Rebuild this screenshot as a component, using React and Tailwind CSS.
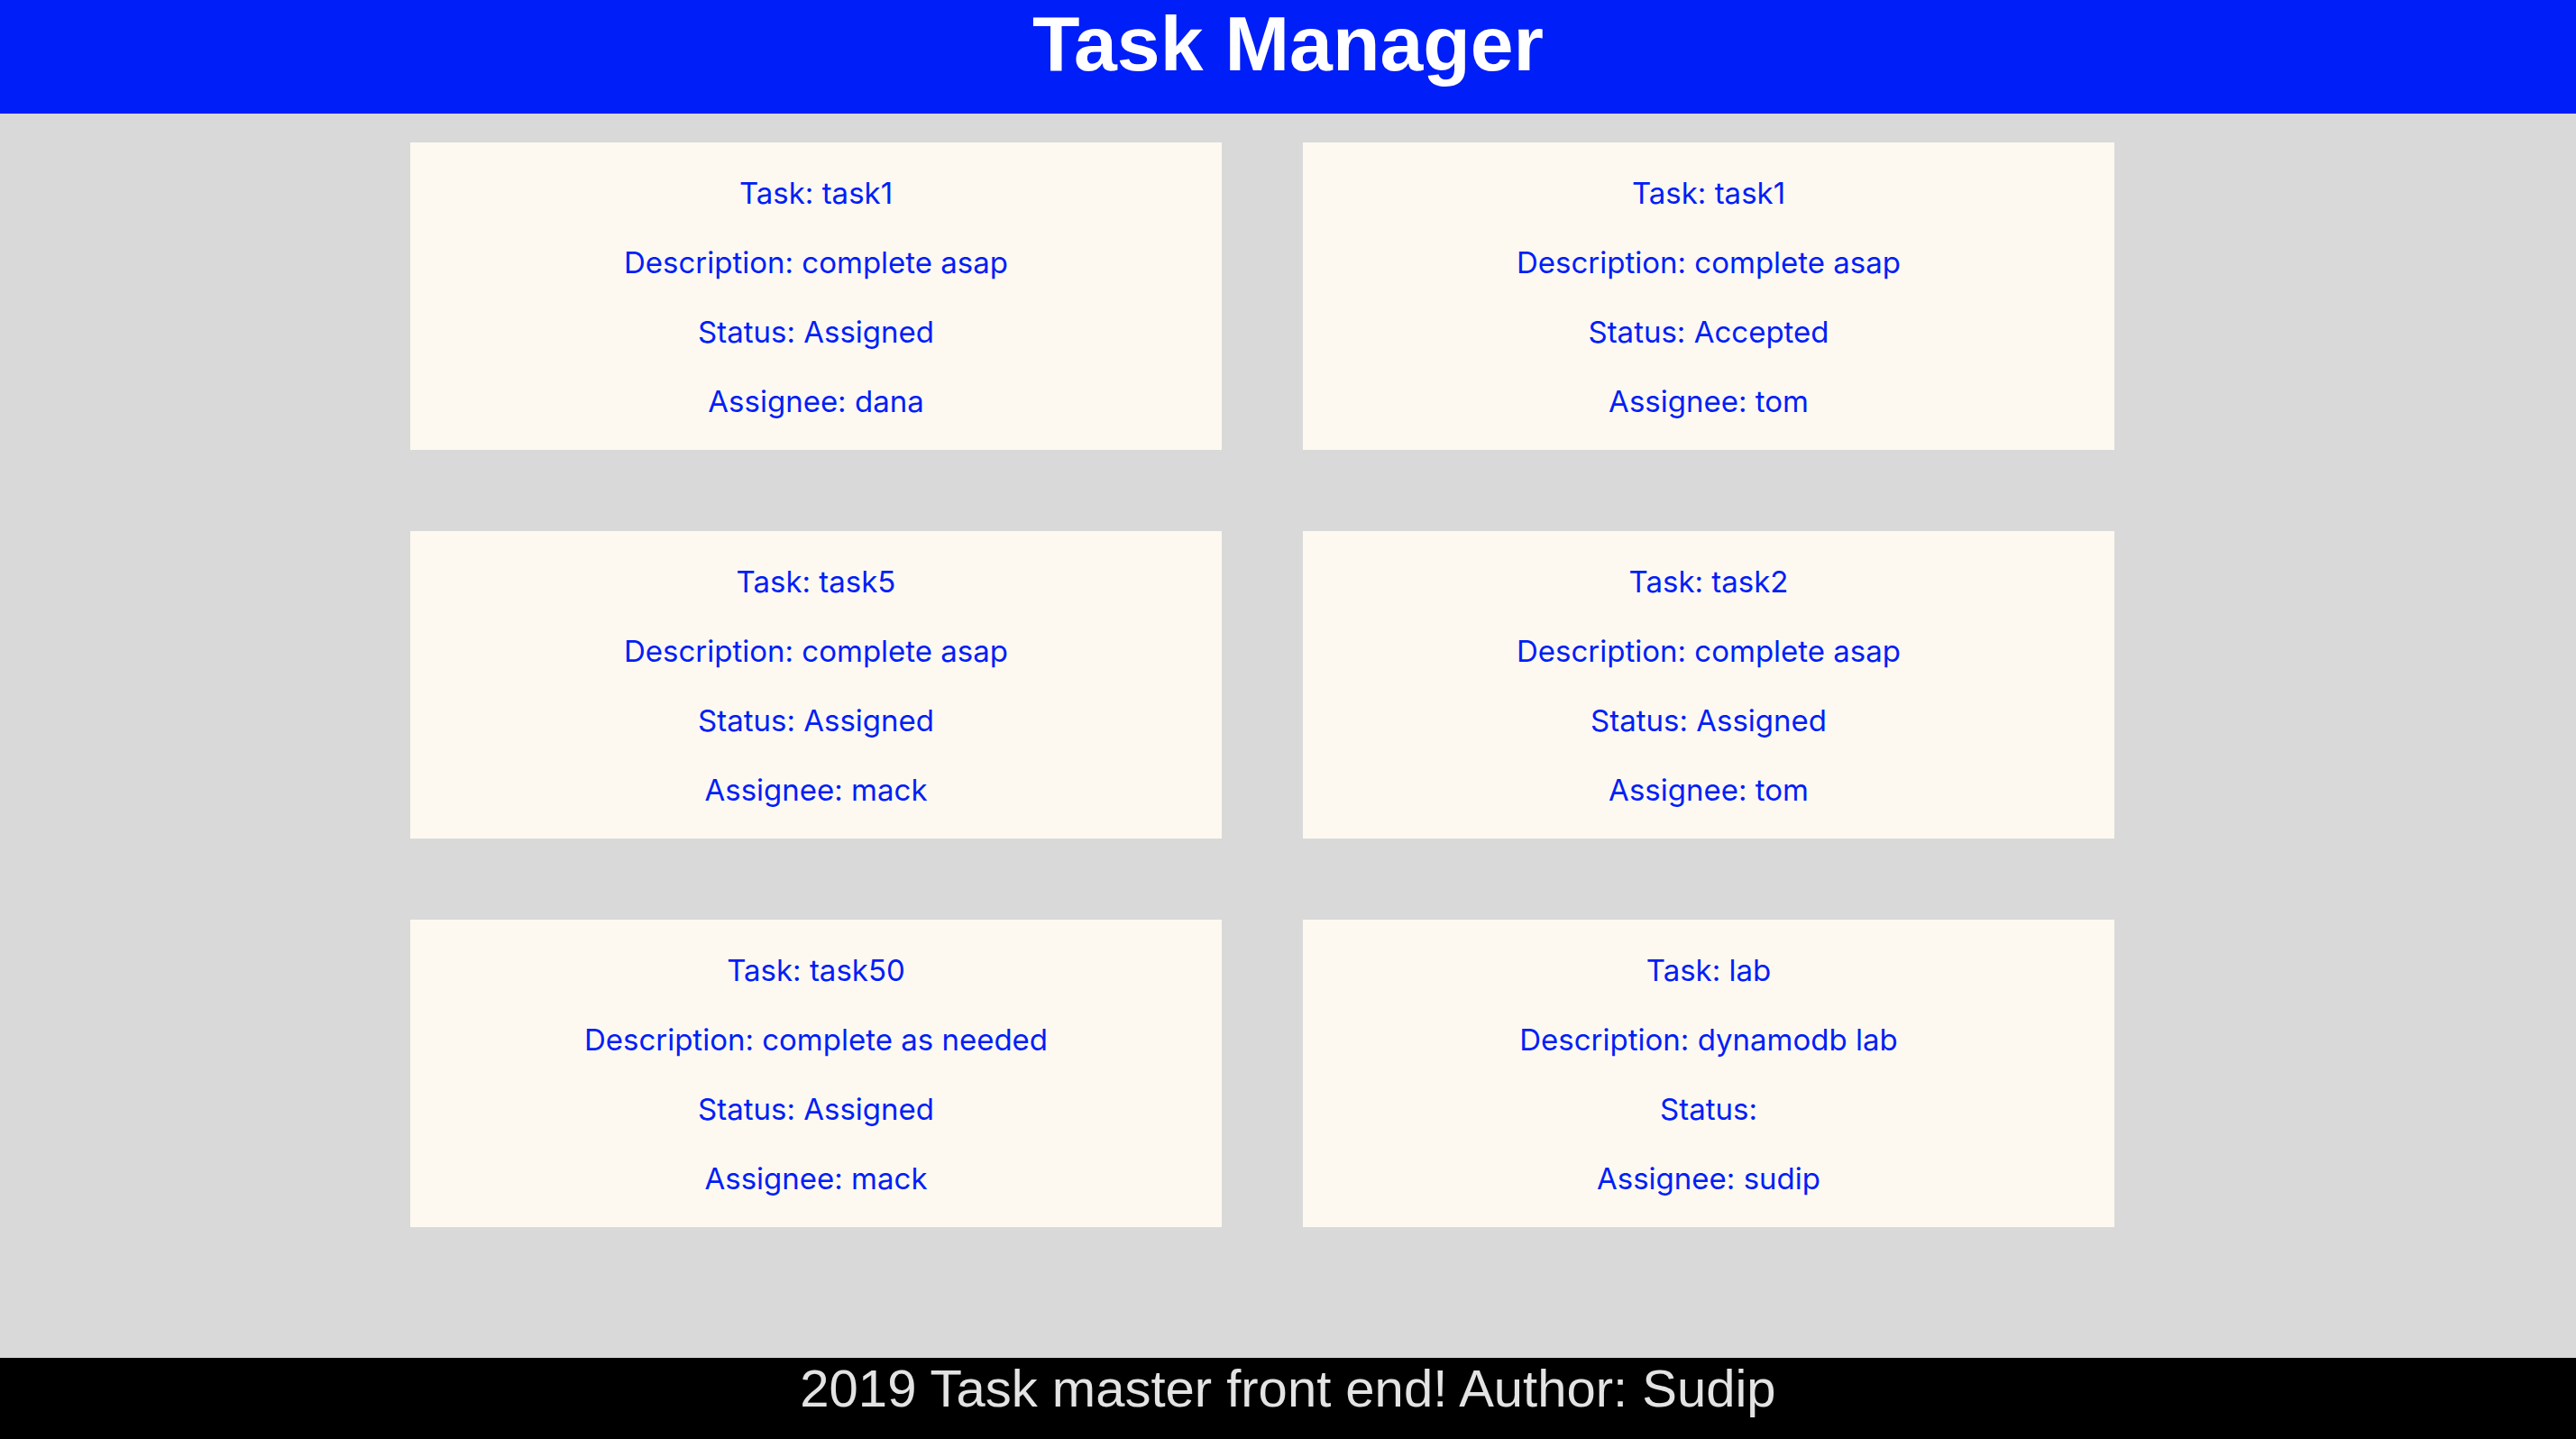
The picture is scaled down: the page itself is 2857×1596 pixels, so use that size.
import React from "react";

const tasks = [
    { title: "task1", description: "complete asap", status: "Assigned", assignee: "dana" },
    { title: "task1", description: "complete asap", status: "Accepted", assignee: "tom" },
    { title: "task5", description: "complete asap", status: "Assigned", assignee: "mack" },
    { title: "task2", description: "complete asap", status: "Assigned", assignee: "tom" },
    { title: "task50", description: "complete as needed", status: "Assigned", assignee: "mack" },
    { title: "lab", description: "dynamodb lab", status: "", assignee: "sudip" },
];

function TaskCard({ task }) {
    return (
        <li className="bg-[#fdf9f1] h-[341px] pt-[36px] flex flex-col gap-[37px] items-center text-[#001ef7] text-[33px] leading-[40px] font-['Inter',sans-serif]">
            <p>Task: {task.title}</p>
            <p>Description: {task.description}</p>
            <p>Status: {task.status}</p>
            <p>Assignee: {task.assignee}</p>
        </li>
    );
}

export default function App() {
    return (
        <div className="min-h-screen flex flex-col bg-[#d9d9d9] font-['Liberation_Sans',Arial,sans-serif]">
            <header className="h-[126px] bg-[#001ef7] text-center">
                <h1 className="text-white font-bold text-[86px] leading-[97px]">Task Manager</h1>
            </header>

            <main className="flex-1 pt-[32px] pl-[455px]">
                <ul className="grid grid-cols-[900px_900px] gap-[90px]">
                    {tasks.map((task, i) => (
                        <TaskCard key={i} task={task} />
                    ))}
                </ul>
            </main>

            <footer className="h-[90px] bg-black text-center">
                <p className="text-[#e3e3e3] text-[58px] leading-[68px]">2019 Task master front end! Author: Sudip</p>
            </footer>
        </div>
    );
}
